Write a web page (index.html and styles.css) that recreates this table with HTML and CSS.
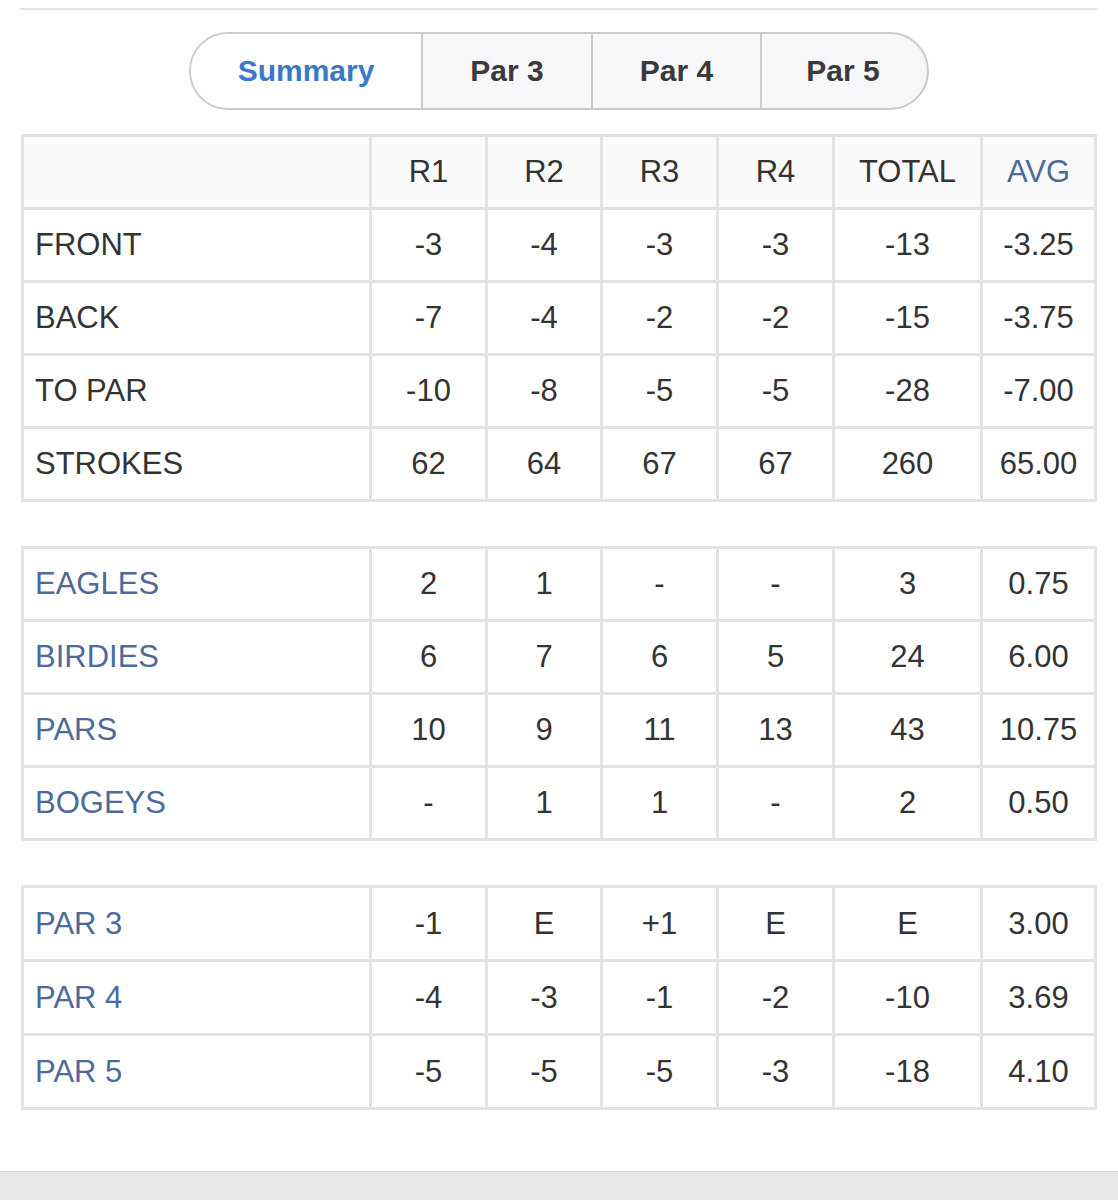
FILE: index.html
```html
<!DOCTYPE html>
<html>
<head>
<meta charset="utf-8">
<link rel="stylesheet" href="styles.css">
</head>
<body>
<div class="card">
  <div class="rule"></div>
  <div class="seg-wrap">
    <div class="seg">
      <div class="seg-item active s1">Summary</div>
      <div class="seg-item s2">Par 3</div>
      <div class="seg-item s3">Par 4</div>
      <div class="seg-item s4">Par 5</div>
    </div>
  </div>

  <table class="stats">
    <colgroup>
      <col class="c-label"><col class="c-r1"><col class="c-r2"><col class="c-r3"><col class="c-r4"><col class="c-tot"><col class="c-avg">
    </colgroup>
    <tr class="head">
      <td></td><td>R1</td><td>R2</td><td>R3</td><td>R4</td><td>TOTAL</td><td class="blue">AVG</td>
    </tr>
    <tr><td class="label">FRONT</td><td>-3</td><td>-4</td><td>-3</td><td>-3</td><td>-13</td><td>-3.25</td></tr>
    <tr><td class="label">BACK</td><td>-7</td><td>-4</td><td>-2</td><td>-2</td><td>-15</td><td>-3.75</td></tr>
    <tr><td class="label">TO PAR</td><td>-10</td><td>-8</td><td>-5</td><td>-5</td><td>-28</td><td>-7.00</td></tr>
    <tr><td class="label">STROKES</td><td>62</td><td>64</td><td>67</td><td>67</td><td>260</td><td>65.00</td></tr>
  </table>

  <table class="stats">
    <colgroup>
      <col class="c-label"><col class="c-r1"><col class="c-r2"><col class="c-r3"><col class="c-r4"><col class="c-tot"><col class="c-avg">
    </colgroup>
    <tr><td class="label blue">EAGLES</td><td>2</td><td>1</td><td>-</td><td>-</td><td>3</td><td>0.75</td></tr>
    <tr><td class="label blue">BIRDIES</td><td>6</td><td>7</td><td>6</td><td>5</td><td>24</td><td>6.00</td></tr>
    <tr><td class="label blue">PARS</td><td>10</td><td>9</td><td>11</td><td>13</td><td>43</td><td>10.75</td></tr>
    <tr><td class="label blue">BOGEYS</td><td>-</td><td>1</td><td>1</td><td>-</td><td>2</td><td>0.50</td></tr>
  </table>

  <table class="stats tall">
    <colgroup>
      <col class="c-label"><col class="c-r1"><col class="c-r2"><col class="c-r3"><col class="c-r4"><col class="c-tot"><col class="c-avg">
    </colgroup>
    <tr><td class="label blue">PAR 3</td><td>-1</td><td>E</td><td>+1</td><td>E</td><td>E</td><td>3.00</td></tr>
    <tr><td class="label blue">PAR 4</td><td>-4</td><td>-3</td><td>-1</td><td>-2</td><td>-10</td><td>3.69</td></tr>
    <tr><td class="label blue">PAR 5</td><td>-5</td><td>-5</td><td>-5</td><td>-3</td><td>-18</td><td>4.10</td></tr>
  </table>
</div>
</body>
</html>
```

FILE: styles.css
```css
html, body {
  margin: 0;
  padding: 0;
}
body {
  background: #e8e8e9;
  font-family: "Liberation Sans", Arial, sans-serif;
  color: #333;
}
.card {
  background: #fff;
  width: 1118px;
  box-sizing: border-box;
  padding: 8px 21px 61px 21px;
  box-shadow: 0 4px 10px rgba(0,0,0,0.28);
  border-bottom: 1px solid #dcdcdc;
}
.rule {
  height: 2px;
  background: #e4e4e4;
  margin-left: -1px;
}
.seg-wrap {
  display: flex;
  justify-content: center;
  margin-top: 22px;
  margin-bottom: 24px;
}
.seg {
  display: flex;
  width: 740px;
  height: 78px;
  box-sizing: border-box;
  border: 2px solid #cacaca;
  border-radius: 39px;
  overflow: hidden;
  background: #f7f7f9;
}
.seg-item {
  display: flex;
  align-items: center;
  justify-content: center;
  box-sizing: border-box;
  font-weight: bold;
  font-size: 30px;
  color: #3a3a3a;
  border-left: 2px solid #cacaca;
}
.seg-item.s1 { width: 230px; border-left: none; }
.seg-item.s2 { width: 170px; }
.seg-item.s3 { width: 169px; }
.seg-item.s4 { width: 167px; padding-right: 3px; }
.seg-item.active {
  background: #fff;
  color: #3b78c8;
}
.stats {
  width: 1076px;
  table-layout: fixed;
  border-collapse: separate;
  border-spacing: 0;
  border-top: 3px solid #e3e3e3;
  border-left: 3px solid #e3e3e3;
  margin-bottom: 44px;
}
.stats:last-child {
  margin-bottom: 0;
}
.c-label { width: 348px; }
.c-r1 { width: 116px; }
.c-r2 { width: 115px; }
.c-r3 { width: 116px; }
.c-r4 { width: 116px; }
.c-tot { width: 148px; }
.c-avg { width: 114px; }
.stats td {
  border-right: 3px solid #e3e3e3;
  border-bottom: 3px solid #e3e3e3;
  height: 70px;
  padding: 0;
  text-align: center;
  vertical-align: middle;
  font-size: 31px;
  color: #333;
}
.stats.tall td {
  height: 71px;
}
.stats td.label {
  text-align: left;
  padding-left: 11px;
}
.stats tr.head td {
  background: #fafafa;
}
.stats td.blue {
  color: #4d6a9a;
}
```
